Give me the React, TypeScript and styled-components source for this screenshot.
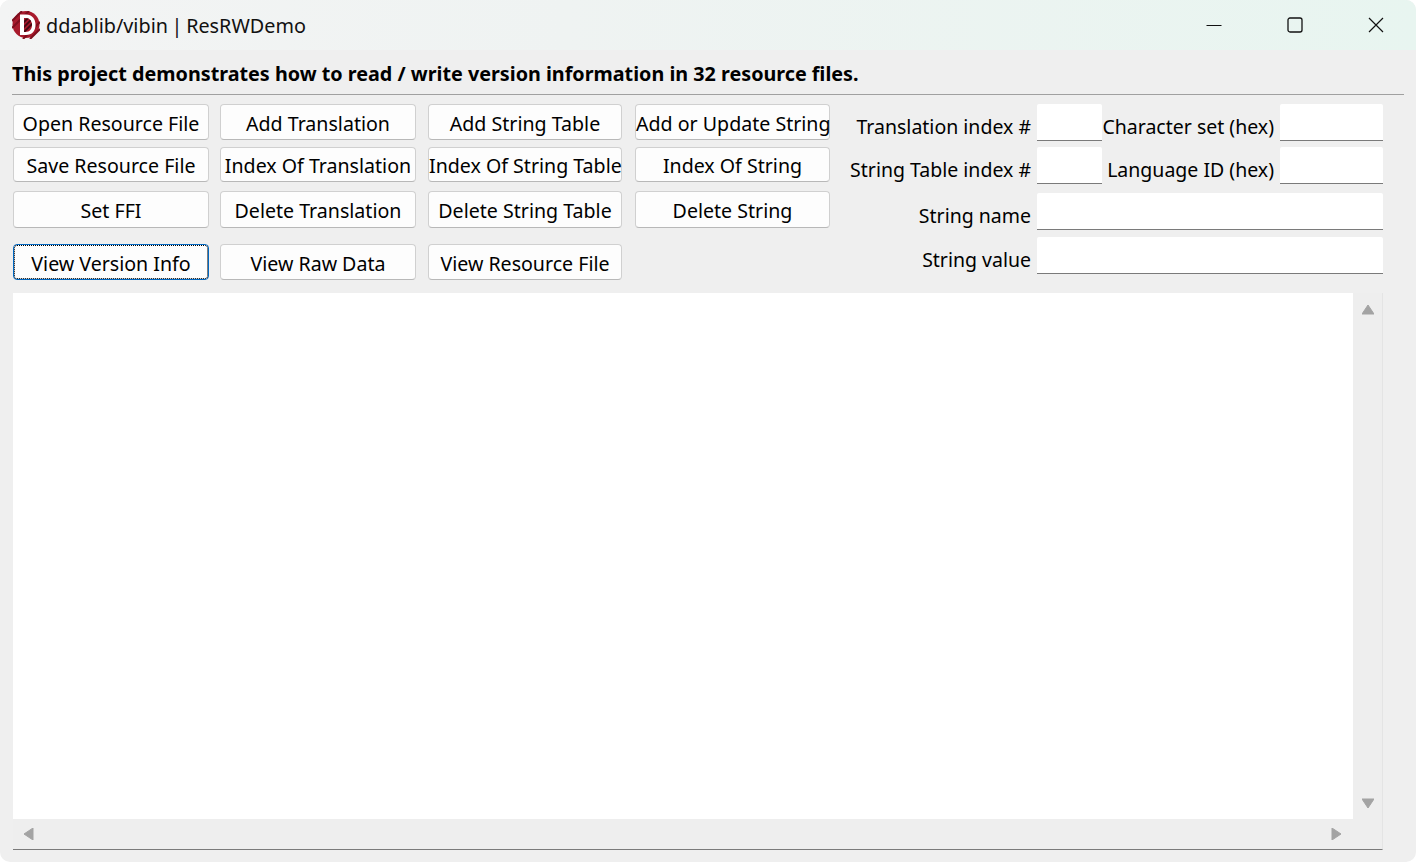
// App.tsx
import React from "react";
import styled, { createGlobalStyle } from "styled-components";

const UI_FONT = `"Noto Sans", "Open Sans", sans-serif`;

const GlobalStyle = createGlobalStyle`
  html, body {
    margin: 0;
    height: 100%;
    background: #ffffff;
  }
  * {
    box-sizing: border-box;
  }
`;

const Window = styled.div`
  width: 1416px;
  height: 862px;
  display: flex;
  flex-direction: column;
  background: #efefef;
  border-radius: 10px;
  overflow: hidden;
  font-family: ${UI_FONT};
  color: #000;
`;

const TitleBar = styled.header`
  height: 50px;
  flex: none;
  display: flex;
  align-items: center;
  padding-left: 12px;
  background: linear-gradient(90deg, #f3f4f4 0%, #eff3f2 40%, #e8f5f0 100%);
`;

const AppTitle = styled.span`
  margin-left: 6px;
  font-size: 19.8px;
  word-spacing: -1.5px;
  color: #111;
  white-space: nowrap;
`;

const WindowControls = styled.div`
  margin-left: auto;
  display: flex;
`;

const WindowControl = styled.div`
  width: 81px;
  height: 50px;
  display: flex;
  align-items: center;
  justify-content: center;
`;

const Content = styled.main`
  flex: 1;
  min-height: 0;
  display: flex;
  flex-direction: column;
  padding: 0 12px 12px 12px;
`;

const Heading = styled.h1`
  margin: 0;
  height: 45px;
  padding-top: 8px;
  line-height: 32px;
  font-size: 19.75px;
  font-weight: 700;
  border-bottom: 1px solid #a0a0a0;
  white-space: nowrap;
`;

const Controls = styled.section`
  display: flex;
  padding: 9px 0 0 1px;
  height: 198px;
  flex: none;
`;

const ButtonGrid = styled.div`
  width: 817px;
  flex: none;
  display: grid;
  grid-template-columns: 207px 208px 207px 195px;
  grid-template-rows: 43px 44px 53px 36px;
  justify-items: start;
  align-items: start;

  & > button:nth-child(4n + 3) {
    width: 194px;
  }
  & > button:nth-child(4n) {
    width: 195px;
  }
  & > button:nth-child(n + 5):nth-child(-n + 8) {
    height: 35px;
    padding-top: 3px;
  }
  & > button:nth-child(n + 9):nth-child(-n + 12) {
    height: 37px;
    padding-top: 3px;
  }
`;

const ActionButton = styled.button<{ $focused?: boolean }>`
  width: 196px;
  height: 36px;
  padding: 4px 0 0 0;
  font-family: ${UI_FONT};
  font-size: 19.6px;
  line-height: 1;
  color: #000;
  white-space: nowrap;
  background: #fdfdfd;
  border: 1px solid ${(p) => (p.$focused ? "#0067c0" : "#d0d0d0")};
  border-bottom-color: ${(p) => (p.$focused ? "#0067c0" : "#b8b8b8")};
  border-radius: 4px;
  outline: ${(p) => (p.$focused ? "1px dotted #000" : "none")};
  outline-offset: -2px;
`;

const FormGrid = styled.div`
  flex: none;
  display: grid;
  grid-template-columns: 207px 65px 178px 103px;
  grid-template-rows: 43px 46px 44px 37px;
  align-items: start;
`;

const FieldLabel = styled.label`
  height: 37px;
  padding: 5px 6px 0 0;
  font-size: 19.5px;
  line-height: 36px;
  text-align: right;
  white-space: nowrap;
`;

const TextField = styled.input<{ $wide?: boolean }>`
  grid-column: ${(p) => (p.$wide ? "span 3" : "auto")};
  width: 100%;
  height: 37px;
  padding: 0 6px;
  background: #ffffff;
  border: none;
  border-bottom: 1px solid #7a7a7a;
  border-radius: 2px 2px 0 0;
  outline: none;
`;

const LogBox = styled.section`
  flex: 1;
  min-height: 0;
  width: 1370px;
  margin-left: 1px;
  display: grid;
  grid-template-columns: 1fr 29px;
  grid-template-rows: 1fr 30px;
  background: #eeeeee;
  border-right: 1px solid #e4e4e4;
  border-bottom: 1px solid #7a7a7a;
`;

const LogArea = styled.div`
  background: #ffffff;
`;

const VerticalBar = styled.div`
  display: flex;
  flex-direction: column;
  align-items: center;
  justify-content: space-between;
  padding: 11px 0 9px 0;
`;

const HorizontalBar = styled.div`
  display: flex;
  align-items: center;
  justify-content: space-between;
  padding: 0 10px 0 10px;
`;

const Corner = styled.div``;

const Arrow: React.FC<{ dir: "up" | "down" | "left" | "right" }> = ({ dir }) => {
  const points = {
    up: "6,1 12,10 0,10",
    down: "0,1 12,1 6,10",
    left: "10,0 10,12 1,6",
    right: "1,0 10,6 1,12",
  }[dir];
  return (
    <svg width="12" height="12" viewBox="0 0 12 12">
      <polygon points={points} fill="#a3a3a3" stroke="#a3a3a3" strokeWidth="1" strokeLinejoin="round" />
    </svg>
  );
};

const Logo = () => (
  <svg width="28" height="28" viewBox="0 0 28 28">
    <defs>
      <clipPath id="logo-d">
        <path d="M12 7h1.500c4 0 6.500 2.800 6.500 7s-2.500 7-6.500 7H12z" />
      </clipPath>
    </defs>
    <circle cx="14" cy="13.500" r="13.500" fill="#a81a2c" />
    <path d="M0 10 L10 0 M0 17 L17 0 M11 28 L28 11 M18 28 L28 18" stroke="#7e0f1e" strokeWidth="2" />
    <path d="M8 3.500h6C20 3.500 23.500 8 23.500 14S20 24 14 24H8z" fill="#ffffff" />
    <g clipPath="url(#logo-d)">
      <rect x="11" y="6" width="10" height="16" fill="#a5162a" />
      <path d="M10 13 L17 6 M10 18 L21 7 M12 21 L22 11" stroke="#3f0811" strokeWidth="1.800" />
    </g>
  </svg>
);

const BUTTONS = [
  "Open Resource File",
  "Add Translation",
  "Add String Table",
  "Add or Update String",
  "Save Resource File",
  "Index Of Translation",
  "Index Of String Table",
  "Index Of String",
  "Set FFI",
  "Delete Translation",
  "Delete String Table",
  "Delete String",
  "View Version Info",
  "View Raw Data",
  "View Resource File",
];

export default function App() {
  return (
    <Window>
      <GlobalStyle />
      <TitleBar>
        <Logo />
        <AppTitle>ddablib/vibin | ResRWDemo</AppTitle>
        <WindowControls>
          <WindowControl>
            <svg width="16" height="16" viewBox="0 0 16 16">
              <path d="M0.500 8.500h15" stroke="#111" strokeWidth="1" />
            </svg>
          </WindowControl>
          <WindowControl>
            <svg width="16" height="16" viewBox="0 0 16 16">
              <rect x="1" y="1" width="14" height="14" rx="2" fill="none" stroke="#111" strokeWidth="1.300" />
            </svg>
          </WindowControl>
          <WindowControl>
            <svg width="16" height="16" viewBox="0 0 16 16">
              <path d="M1 1L15 15M15 1L1 15" stroke="#111" strokeWidth="1.200" />
            </svg>
          </WindowControl>
        </WindowControls>
      </TitleBar>
      <Content>
        <Heading>This project demonstrates how to read / write version information in 32 resource files.</Heading>
        <Controls>
          <ButtonGrid>
            {BUTTONS.map((label) => (
              <ActionButton key={label} $focused={label === "View Version Info"}>
                {label}
              </ActionButton>
            ))}
          </ButtonGrid>
          <FormGrid>
            <FieldLabel>Translation index #</FieldLabel>
            <TextField />
            <FieldLabel>Character set (hex)</FieldLabel>
            <TextField />
            <FieldLabel>String Table index #</FieldLabel>
            <TextField />
            <FieldLabel>Language ID (hex)</FieldLabel>
            <TextField />
            <FieldLabel>String name</FieldLabel>
            <TextField $wide />
            <FieldLabel>String value</FieldLabel>
            <TextField $wide />
          </FormGrid>
        </Controls>
        <LogBox>
          <LogArea />
          <VerticalBar>
            <Arrow dir="up" />
            <Arrow dir="down" />
          </VerticalBar>
          <HorizontalBar>
            <Arrow dir="left" />
            <Arrow dir="right" />
          </HorizontalBar>
          <Corner />
        </LogBox>
      </Content>
    </Window>
  );
}
